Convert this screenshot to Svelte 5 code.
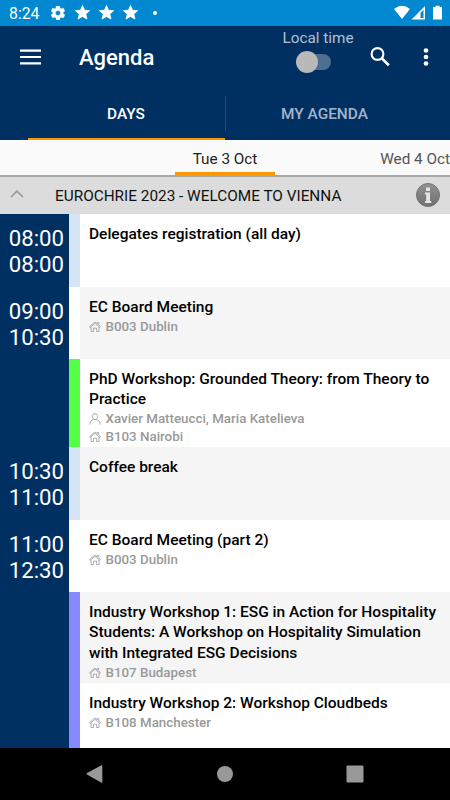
<script lang="ts">
  type Session = {
    title: string;
    start?: string;
    end?: string;
    speakers?: string;
    room?: string;
    color: string;
    height: number;
  };

  const sessions: Session[] = [
    { title: 'Delegates registration (all day)', start: '08:00', end: '08:00', color: '#d7e4f5', height: 73 },
    { title: 'EC Board Meeting', start: '09:00', end: '10:30', room: 'B003 Dublin', color: '#ffffff', height: 72 },
    {
      title: 'PhD Workshop: Grounded Theory: from Theory to Practice',
      speakers: 'Xavier Matteucci, Maria Katelieva',
      room: 'B103 Nairobi',
      color: '#55ff44',
      height: 88,
    },
    { title: 'Coffee break', start: '10:30', end: '11:00', color: '#d7e4f5', height: 73 },
    { title: 'EC Board Meeting (part 2)', start: '11:00', end: '12:30', room: 'B003 Dublin', color: '#ffffff', height: 72 },
    {
      title: 'Industry Workshop 1: ESG in Action for Hospitality Students: A Workshop on Hospitality Simulation with Integrated ESG Decisions',
      room: 'B107 Budapest',
      color: '#8888ff',
      height: 91,
    },
    { title: 'Industry Workshop 2: Workshop Cloudbeds', room: 'B108 Manchester', color: '#8888ff', height: 65 },
  ];

  const stars = [0, 1, 2];

  let tab = $state('days');
  let localTime = $state(false);
  let expanded = $state(true);
</script>

<div class="screen">
  <div class="status-bar">
    <span class="clock">8:24</span>
    <svg class="gear" viewBox="2 2 20 20" width="14" height="14">
      <path
        fill="#fff"
        fill-rule="evenodd"
        stroke="#fff"
        stroke-width=".6"
        d="M19.4 13a7.500 7.500 0 0 0 0-2l2.100-1.600c.2-.2.200-.4.100-.6l-2-3.500c-.1-.2-.4-.3-.6-.2l-2.500 1a7.300 7.300 0 0 0-1.700-1l-.4-2.600a.5.5 0 0 0-.5-.4h-4a.5.5 0 0 0-.5.4L9.100 5.100a7.300 7.300 0 0 0-1.700 1l-2.500-1a.5.5 0 0 0-.6.2l-2 3.500c-.1.200-.1.500.1.600L4.600 11a7.500 7.500 0 0 0 0 2l-2.200 1.600c-.2.200-.2.400-.1.600l2 3.500c.1.200.4.300.6.200l2.500-1c.5.400 1.100.7 1.700 1l.4 2.600c0 .3.200.4.500.4h4c.300 0 .5-.2.500-.4l.4-2.600c.6-.3 1.200-.6 1.700-1l2.500 1c.2.100.5 0 .6-.2l2-3.500c.1-.2.100-.5-.1-.6zM12 15.600a3.600 3.600 0 1 1 0-7.200 3.600 3.600 0 0 1 0 7.200z"
      />
    </svg>
    <div class="stars">
      {#each stars as star (star)}
        <svg viewBox="1.500 1.300 21 20.300" width="15" height="14.500">
          <path
            fill="#fff"
            stroke="#fff"
            stroke-width="1.200"
            d="M12 17.300 18.200 21l-1.600-7L22 9.200l-7.200-.6L12 2 9.200 8.600 2 9.200 7.500 14l-1.700 7z"
          />
        </svg>
      {/each}
    </div>
    <span class="dot"></span>
    <svg class="signals" viewBox="0 0 49 16" width="49" height="16">
      <path fill="#fff" d="M0 3.900Q8 -2.300 16 3.900L8 14z" />
      <path fill="#fff" fill-rule="evenodd" d="M17.500 14.500 31 1v13.500zM26.500 7.800v5.200h3V4.800z" />
      <path fill="#fff" d="M39 2h2.500V.8h4V2H48v12.500h-9z" />
    </svg>
  </div>

  <header class="app-bar">
    <button class="icon-button menu" aria-label="Menu">
      <svg viewBox="0 0 21 16" width="21" height="16">
        <path stroke="#fff" stroke-width="2.200" d="M0 1.700h21M0 8h21M0 14.300h21" />
      </svg>
    </button>
    <h1>Agenda</h1>
    <label class="local-time">
      <span>Local time</span>
      <input type="checkbox" bind:checked={localTime} />
      <span class="switch" class:on={localTime}></span>
    </label>
    <button class="icon-button search" aria-label="Search">
      <svg viewBox="0 0 20 20" width="20" height="20">
        <circle cx="7.500" cy="7" r="5.900" fill="none" stroke="#fff" stroke-width="2.100" />
        <path stroke="#fff" stroke-width="2.700" d="m11.900 11.400 6.900 6.900" />
      </svg>
    </button>
    <button class="icon-button" aria-label="More">
      <svg viewBox="0 0 6 20" width="6" height="20">
        <circle cx="3" cy="3.500" r="2.350" fill="#fff" />
        <circle cx="3" cy="10" r="2.350" fill="#fff" />
        <circle cx="3" cy="16.500" r="2.350" fill="#fff" />
      </svg>
    </button>
  </header>

  <nav class="tabs">
    <button class="tab" class:active={tab === 'days'} onclick={() => (tab = 'days')}>DAYS</button>
    <button class="tab" class:active={tab === 'mine'} onclick={() => (tab = 'mine')}>MY AGENDA</button>
  </nav>

  <div class="day-strip">
    <span></span>
    <span class="day current">Tue 3 Oct</span>
    <span class="day next">Wed 4 Oct</span>
  </div>

  <div class="group-header">
    <button class="icon-button chevron" aria-label="Collapse" onclick={() => (expanded = !expanded)}>
      <svg viewBox="0 0 14 8" width="14" height="8">
        <path fill="none" stroke="#999" stroke-width="1.700" d="M1 7 7 1.200 13 7" />
      </svg>
    </button>
    <h2>EUROCHRIE 2023 - WELCOME TO VIENNA</h2>
    <svg class="info" viewBox="0 0 24 24" width="24" height="24">
      <defs>
        <linearGradient id="info-fill" x1="0" y1="0" x2="0" y2="1">
          <stop offset="0" stop-color="#919191" />
          <stop offset="1" stop-color="#707070" />
        </linearGradient>
      </defs>
      <circle cx="12" cy="12" r="11.500" fill="url(#info-fill)" stroke="#747474" />
      <path fill="#e4e4e4" d="M10 4.500h4v3.400h-4zM9 9.500h5v8.500h1.200v2H9v-2h1.200v-6.500H9z" />
    </svg>
  </div>

  <main class="agenda">
    {#if expanded}
      {#each sessions as session}
        <div class="row" style="height: {session.height}px; --track: {session.color}">
          <div class="times">
            {#if session.start}
              <span>{session.start}</span>
              <span>{session.end}</span>
            {/if}
          </div>
          <div class="session">
            <h3>{session.title}</h3>
            {#if session.speakers}
              <p>
                <svg viewBox="0 0 12 12" width="12" height="12">
                  <path
                    fill="none"
                    stroke="#929292"
                    stroke-width=".8"
                    d="M6 .8c1.800 0 2.700 1.200 2.700 2.800S7.600 6.700 6 6.700 3.300 5.200 3.300 3.600 4.200.8 6 .8zM.8 11.500C.8 8.500 2.300 7.200 4.300 6.600M11.200 11.500c0-3-1.500-4.300-3.500-4.900"
                  />
                </svg>
                {session.speakers}
              </p>
            {/if}
            {#if session.room}
              <p>
                <svg viewBox="0 0 12 12" width="12" height="12">
                  <path
                    fill="none"
                    stroke="#85858f"
                    stroke-width=".65"
                    d="M.6 5.500 6 1l2.300 1.900V1.500h1.400v2.600l1.700 1.400-.5.900L6 2.400 1.100 6.400zM2 6v4.500h2.400V7.200h3.200v3.300H10V6"
                  />
                </svg>
                {session.room}
              </p>
            {/if}
          </div>
        </div>
      {/each}
    {/if}
  </main>

  <footer class="system-nav">
    <svg viewBox="0 0 18 20" width="18" height="20">
      <path fill="#999" d="M1 9 15.500 1.200q.8-.3.800.600v16.400q0 .8-.8.500L1 10.500q-1-.7 0-1.500z" />
    </svg>
    <svg viewBox="0 0 18 18" width="18" height="18"><circle cx="9" cy="9" r="8" fill="#999" /></svg>
    <svg viewBox="0 0 18 18" width="18" height="18"><rect x=".5" y=".5" width="17" height="17" rx="1" fill="#999" /></svg>
  </footer>
</div>

<style>
  :global(body) {
    margin: 0;
  }

  .screen {
    display: flex;
    flex-direction: column;
    width: 450px;
    height: 800px;
    overflow: hidden;
    background: #fff;
    font-family: Roboto, 'Liberation Sans', sans-serif;
  }

  button {
    padding: 0;
    border: 0;
    background: none;
    font: inherit;
    cursor: pointer;
  }

  h1,
  h2,
  h3,
  p {
    margin: 0;
  }

  svg {
    display: block;
    flex: none;
  }

  .status-bar {
    display: flex;
    flex: none;
    align-items: center;
    box-sizing: border-box;
    height: 26px;
    padding: 0 7px 0 9px;
    background: #0288d1;
    color: #fff;
  }

  .clock {
    width: 42px;
    font-size: 15.800px;
    line-height: 26px;
    padding-top: 1px;
  }

  .stars {
    display: flex;
    gap: 9px;
    margin: -1px 0 0 10px;
  }

  .dot {
    width: 4px;
    height: 4px;
    margin-left: 15px;
    border-radius: 50%;
    background: #fff;
  }

  .signals {
    margin-left: auto;
  }

  .app-bar {
    display: flex;
    flex: none;
    align-items: center;
    box-sizing: border-box;
    height: 64px;
    padding: 0 21px 2px 20px;
    background: #003061;
  }

  h1 {
    flex: 1;
    margin-left: 38px;
    padding-top: 1px;
    color: #fff;
    font-size: 22px;
    font-weight: 500;
  }

  .local-time {
    display: flex;
    flex-direction: column;
    align-items: center;
    align-self: flex-start;
    width: 72px;
    padding-top: 4px;
    color: #b3c0d4;
    font-size: 15.300px;
    line-height: 17px;
    white-space: nowrap;
  }

  .local-time input {
    display: none;
  }

  .switch {
    display: flex;
    align-items: center;
    width: 32px;
    height: 16px;
    margin: 7px 6px 0 0;
    border-radius: 8px;
    background: #4d6e91;
  }

  .switch::before {
    content: '';
    width: 22px;
    height: 22px;
    flex: none;
    margin-left: -3px;
    border-radius: 50%;
    background: #b9b9b9;
  }

  .switch.on::before {
    margin-left: 13px;
  }

  .search {
    margin: 0 33px 1px 16px;
  }

  .tabs {
    display: grid;
    flex: none;
    grid-template-columns: 197px 198px;
    justify-content: center;
    height: 50px;
    background: #003061;
  }

  .tab {
    border-bottom: 2px solid transparent;
    color: #a3b4ca;
    font-size: 15.400px;
    font-weight: 500;
    line-height: 48px;
  }

  .tab.active {
    border-bottom-color: #ff9800;
    color: #fff;
  }

  .tab + .tab {
    padding-left: 2px;
    background: linear-gradient(#22497a, #22497a) left 6px / 1px 35px no-repeat;
  }

  .day-strip {
    display: grid;
    flex: none;
    grid-template-columns: 175px 100px 175px;
    height: 35px;
    border-bottom: 2px solid #a7a9a7;
    background: #fafafa;
  }

  .day {
    color: #555;
    font-size: 15.300px;
    line-height: 38px;
    white-space: nowrap;
  }

  .current {
    height: 32px;
    border-bottom: 3px solid #ff9800;
    color: #222;
    text-align: center;
  }

  .next {
    text-align: right;
  }

  .group-header {
    display: flex;
    flex: none;
    align-items: center;
    box-sizing: border-box;
    height: 37px;
    padding: 0 10px;
    background: #dcdcdc;
  }

  .chevron {
    padding-bottom: 3px;
  }

  .info {
    margin-top: -2px;
  }

  h2 {
    flex: 1;
    margin-left: 31px;
    color: #111;
    font-size: 15.350px;
    font-weight: 400;
    white-space: nowrap;
  }

  .agenda {
    flex: 1;
    overflow: hidden;
    background: #003061;
  }

  .row {
    display: grid;
    grid-template-columns: 69px 1fr;
  }

  .times {
    display: flex;
    flex-direction: column;
    padding: 11px 5px 0 0;
    color: #fff;
    font-size: 22.200px;
    line-height: 26px;
    text-align: right;
  }

  .session {
    box-sizing: border-box;
    padding: 10px 10px 0 9px;
    border-left: 11px solid var(--track);
    background: #fff;
  }

  .row:nth-child(even) .session {
    background: #f5f5f5;
  }

  h3 {
    margin-bottom: 0.5px;
    color: #000;
    font-size: 15.500px;
    font-weight: 470;
    line-height: 20.400px;
  }

  p {
    display: flex;
    align-items: center;
    gap: 4.500px;
    color: #999;
    font-size: 13.350px;
    font-weight: 500;
    line-height: 18px;
  }

  .system-nav {
    display: flex;
    flex: none;
    align-items: center;
    justify-content: space-between;
    box-sizing: border-box;
    height: 52px;
    padding: 0 86px;
    background: #000;
  }
</style>
